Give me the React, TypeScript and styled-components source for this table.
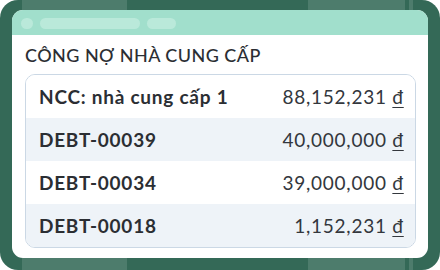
import React from "react";
import styled, { createGlobalStyle } from "styled-components";

const Global = createGlobalStyle`
  html, body { margin: 0; padding: 0; background: #ffffff; }
  body { font-family: "Lato", "Open Sans", sans-serif; }
`;

const DARK = "#346957";
const LIGHT = "#4d7c6c";

const Frame = styled.div`
  width: 440px;
  height: 270px;
  box-sizing: border-box;
  border-radius: 18px;
  padding: 10px 12px 12px 12px;
  background: linear-gradient(
    to right,
    ${DARK} 0 22px,
    ${LIGHT} 22px 127px,
    ${DARK} 127px 308px,
    ${LIGHT} 308px 405px,
    ${DARK} 405px 409px,
    ${LIGHT} 409px 413px,
    ${DARK} 413px
  );
  display: flex;
`;

const Window = styled.div`
  flex: 1;
  background: #ffffff;
  border-radius: 11px;
  overflow: hidden;
  display: flex;
  flex-direction: column;
`;

const TitleBar = styled.div`
  height: 25px;
  background: #a1dfcc;
  display: flex;
  align-items: center;
  gap: 7px;
  padding: 1px 0 0 9px;
  box-sizing: border-box;
`;

const Pill = styled.div<{ $w: number }>`
  width: ${(p) => p.$w}px;
  height: 11px;
  border-radius: 6px;
  background: #bae9da;
`;

const Content = styled.div`
  flex: 1;
  display: flex;
  flex-direction: column;
  padding: 0 12px 10px 13px;
`;

const Heading = styled.div`
  height: 39px;
  display: flex;
  align-items: center;
  font-size: 18px;
  font-weight: 500;
  letter-spacing: 0.45px;
  color: #2b2e33;
`;

const Table = styled.div`
  border: 1px solid #cbd8e5;
  border-radius: 10px;
  overflow: hidden;
  display: flex;
  flex-direction: column;
`;

const Row = styled.div<{ $alt: boolean }>`
  height: 43px;
  display: flex;
  align-items: center;
  justify-content: space-between;
  padding: 0 12px 0 13px;
  background: ${(p) => (p.$alt ? "#eef3f8" : "#ffffff")};
  font-size: 19px;
  letter-spacing: 0.75px;
  color: #2b2e33;
`;

const Name = styled.span`
  font-weight: 700;
`;

const Amount = styled.span`
  font-weight: 400;
  color: #33373d;
  margin-right: -0.75px;
`;

const Currency = styled.span`
  text-decoration: underline;
  text-underline-offset: 3px;
`;

const rows = [
  { name: "NCC: nhà cung cấp 1", amount: "88,152,231" },
  { name: "DEBT-00039", amount: "40,000,000" },
  { name: "DEBT-00034", amount: "39,000,000" },
  { name: "DEBT-00018", amount: "1,152,231" },
];

export default function App() {
  return (
    <>
      <Global />
      <Frame>
        <Window>
          <TitleBar>
            <Pill $w={12} />
            <Pill $w={100} />
            <Pill $w={29} />
          </TitleBar>
          <Content>
            <Heading>CÔNG NỢ NHÀ CUNG CẤP</Heading>
            <Table>
              {rows.map((r, i) => (
                <Row key={r.name} $alt={i % 2 === 1}>
                  <Name>{r.name}</Name>
                  <Amount>
                    {r.amount} <Currency>đ</Currency>
                  </Amount>
                </Row>
              ))}
            </Table>
          </Content>
        </Window>
      </Frame>
    </>
  );
}
